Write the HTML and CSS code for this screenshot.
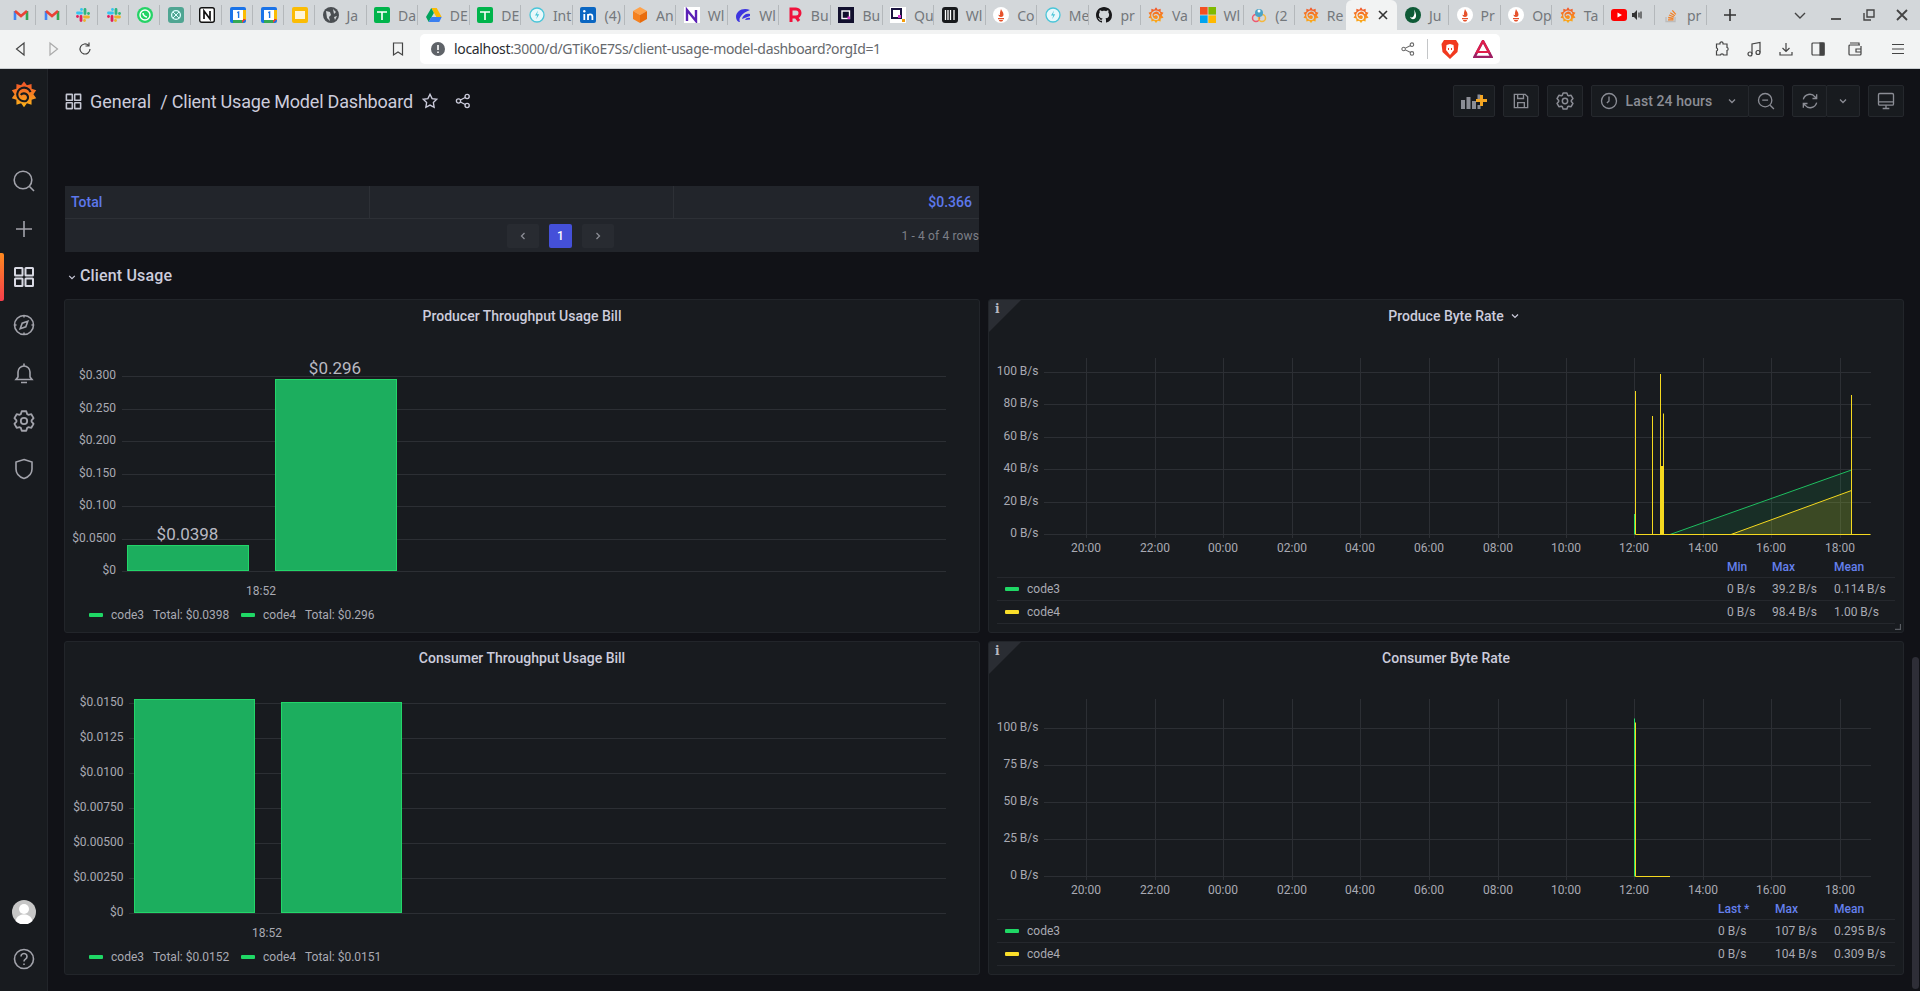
FILE: index.html
```html
<!DOCTYPE html>
<html lang="en">
<head>
<meta charset="utf-8">
<title>Client Usage Model Dashboard</title>
<link rel="stylesheet" href="styles.css">
</head>
<body>
<svg class="defs" aria-hidden="true">
  <defs>
    <linearGradient id="gf" x1="0" y1="0" x2="0" y2="1"><stop offset="0" stop-color="#f2502a"/><stop offset="1" stop-color="#fbb41a"/></linearGradient>
    <symbol id="i-grafana" viewBox="0 0 16 16"><path d="M8 .3 9.790 2.680 12.640 1.810 12.690 4.790 15.510 5.760 13.800 8.200 15.510 10.640 12.690 11.610 12.640 14.590 9.790 13.720 8 16.100 6.210 13.720 3.360 14.590 3.310 11.610 .49 10.640 2.200 8.200 .49 5.760 3.310 4.790 3.360 1.810 6.210 2.680Z" fill="url(#gf)"/><path d="M12 6.800A4.200 4.200 0 1 0 9.200 12.300 2.500 2.500 0 1 0 6 8.600" fill="none" stroke="currentColor" stroke-width="1.300"/></symbol>
    <symbol id="i-gmail" viewBox="0 0 16 16"><path d="M2 13V4" stroke="#4285f4" stroke-width="2.600" fill="none"/><path d="M14 13V4" stroke="#34a853" stroke-width="2.600" fill="none"/><path d="M2 4l6 5 6-5" stroke="#ea4335" stroke-width="2.600" fill="none"/></symbol>
    <symbol id="i-slack" viewBox="0 0 16 16"><g stroke-width="2.800" stroke-linecap="round"><path d="M2.500 6h4" stroke="#36c5f0"/><path d="M10 2.500v4" stroke="#2eb67d"/><path d="M9.500 10h4" stroke="#ecb22e"/><path d="M6 9.500v4" stroke="#e01e5a"/></g><circle cx="6.500" cy="2.500" r="1.400" fill="#36c5f0"/><circle cx="13.500" cy="6.500" r="1.400" fill="#2eb67d"/><circle cx="9.500" cy="13.500" r="1.400" fill="#ecb22e"/><circle cx="2.500" cy="9.500" r="1.400" fill="#e01e5a"/></symbol>
    <symbol id="i-wa" viewBox="0 0 16 16"><circle cx="8" cy="8" r="8" fill="#25d366"/><circle cx="8" cy="8" r="5" fill="none" stroke="#fff" stroke-width="1.400"/><path d="M6 6c0 2 2 4 4 4" stroke="#fff" stroke-width="1.600" fill="none"/></symbol>
    <symbol id="i-gpt" viewBox="0 0 16 16"><rect width="16" height="16" rx="3" fill="#4fa592"/><circle cx="8" cy="8" r="4.400" fill="none" stroke="#dff" stroke-width="1.300"/><path d="M5 5l6 6M11 5l-6 6" stroke="#dff"/></symbol>
    <symbol id="i-notion" viewBox="0 0 16 16"><rect x=".7" y=".7" width="14.600" height="14.600" rx="2" fill="#fff" stroke="#111" stroke-width="1.400"/><path d="M5 12V4l6 8V4" stroke="#111" stroke-width="1.700" fill="none"/></symbol>
    <symbol id="i-gcal" viewBox="0 0 16 16"><rect width="16" height="16" rx="2" fill="#1a73e8"/><rect x="12" y="3" width="4" height="10" fill="#fbbc04"/><rect x="3" y="12" width="10" height="4" fill="#34a853"/><path d="M12 16l4-4h-4z" fill="#ea4335"/><rect x="3" y="3" width="10" height="10" fill="#fff"/><path d="M7.200 5.600 8.600 5v6" stroke="#1a73e8" stroke-width="1.400" fill="none"/></symbol>
    <symbol id="i-slides" viewBox="0 0 16 16"><rect width="16" height="16" rx="2" fill="#fbbc04"/><rect x="3" y="4" width="10" height="8" fill="#fff5d6"/></symbol>
    <symbol id="i-globe" viewBox="0 0 16 16"><circle cx="8" cy="8" r="8" fill="#4a4e52"/><path d="M3 4l4 1 1 3-2 2 1 4-3-3zM10 2l3 3-2 2zM11 10l3-1-2 4z" fill="#d3d7da"/></symbol>
    <symbol id="i-sheets" viewBox="0 0 16 16"><rect width="16" height="16" rx="2" fill="#00b44b"/><path d="M3 5h10M8 5v8" stroke="#fff" stroke-width="1.600"/></symbol>
    <symbol id="i-drive" viewBox="0 0 16 16"><path d="M5.300 1h5.400l5 9h-5.400z" fill="#fbbc04"/><path d="M5.300 1 0 10l2.700 5 5.200-9z" fill="#00a35c"/><path d="M2.700 15h10.600l2.400-5H5.300z" fill="#3a7ff0"/></symbol>
    <symbol id="i-bolt" viewBox="0 0 16 16"><circle cx="8" cy="8" r="7" fill="#e9f8fb" stroke="#49c5d8" stroke-width="1.300"/><path d="M9 3.600 6 8.600h2.200l-1 3.600 3-5H8z" fill="#49c5d8"/></symbol>
    <symbol id="i-li" viewBox="0 0 16 16"><rect width="16" height="16" rx="2" fill="#0a66c2"/><path d="M4.300 7v6M8 13V7M8 9.600c0-3 4.400-3 4.400 0V13" stroke="#fff" stroke-width="1.800" fill="none"/><circle cx="4.300" cy="4.200" r="1.200" fill="#fff"/></symbol>
    <symbol id="i-cube" viewBox="0 0 16 16"><path d="M8 0l7 4-7 4-7-4z" fill="#ffa24a"/><path d="M1 4l7 4v8l-7-4z" fill="#f5811f"/><path d="M15 4l-7 4v8l7-4z" fill="#e96c0c"/></symbol>
    <symbol id="i-nn" viewBox="0 0 16 16"><rect width="16" height="16" fill="#fff"/><path d="M3 14V3l9 11V3" stroke="#5b21b6" stroke-width="2.400" fill="none"/></symbol>
    <symbol id="i-wave" viewBox="0 0 16 16"><path d="M15 3C8 0 1 4 1 10c0 3 2 5 4 5C3 11 7 6 15 3z" fill="#3d35e0"/><path d="M15 7c-4-1-7 1-8 5l8-3zM15 11c-2-.5-4 0-5 2l5-.5z" fill="#3d35e0"/></symbol>
    <symbol id="i-r" viewBox="0 0 16 16"><path d="M4 15V2h5a3.600 3.600 0 0 1 0 8H4m5 0 3 4" fill="none" stroke="#f0123c" stroke-width="3"/></symbol>
    <symbol id="i-bu" viewBox="0 0 16 16"><rect width="16" height="16" fill="#12102e"/><rect x="4" y="4" width="7.500" height="7.500" fill="none" stroke="#fff" stroke-width="1.400"/><rect x="9.500" y="9.500" width="2.500" height="2.500" fill="#e13ad4"/></symbol>
    <symbol id="i-qu" viewBox="0 0 16 16"><rect width="16" height="16" fill="#fff"/><rect x="2" y="2" width="9" height="9" fill="none" stroke="#1b1440" stroke-width="2"/><rect x="8" y="8" width="3" height="3" fill="#d93ad4"/><rect x="12" y="12" width="3" height="3" fill="#f59e0b"/></symbol>
    <symbol id="i-bars" viewBox="0 0 16 16"><rect width="16" height="16" rx="3" fill="#17191c"/><path d="M3.500 3v10M6 3v10M8.500 3v10M12 3v10" stroke="#fff" stroke-width="1.300"/></symbol>
    <symbol id="i-prom" viewBox="0 0 16 16"><circle cx="8" cy="8" r="8" fill="#fff"/><path d="M8 2c.5 2 2.500 3 2.500 5.500 0 1.500-.7 2.500-2.500 2.500S5.500 9 5.500 7.500C6 8 6.500 8 7 8 6.500 6 7.500 4 8 2zM5 11h6v1.300H5zM6 13h4c0 1-1 1.500-2 1.500S6 14 6 13z" fill="#e6522c"/></symbol>
    <symbol id="i-gh" viewBox="0 0 16 16"><path fill="#18181a" d="M8 0C3.580 0 0 3.580 0 8c0 3.540 2.290 6.530 5.470 7.590.4.070.55-.17.55-.38 0-.19-.01-.82-.01-1.490-2.010.37-2.530-.49-2.690-.94-.09-.23-.48-.94-.82-1.130-.28-.15-.68-.52-.01-.53.63-.01 1.080.58 1.230.82.72 1.210 1.870.87 2.330.66.07-.52.28-.87.51-1.070-1.780-.2-3.640-.89-3.640-3.950 0-.87.31-1.590.82-2.150-.08-.2-.36-1.020.08-2.120 0 0 .67-.21 2.200.82.64-.18 1.320-.27 2-.27.68 0 1.360.09 2 .27 1.530-1.040 2.200-.82 2.200-.82.44 1.100.16 1.920.08 2.120.51.56.82 1.270.82 2.150 0 3.070-1.870 3.750-3.650 3.950.29.25.54.73.54 1.480 0 1.070-.01 1.930-.01 2.200 0 .21.15.46.55.38A8.013 8.013 0 0016 8c0-4.420-3.580-8-8-8z"/></symbol>
    <symbol id="i-ms" viewBox="0 0 16 16"><rect width="7.600" height="7.600" fill="#f25022"/><rect x="8.400" width="7.600" height="7.600" fill="#7fba00"/><rect y="8.400" width="7.600" height="7.600" fill="#00a4ef"/><rect x="8.400" y="8.400" width="7.600" height="7.600" fill="#ffb900"/></symbol>
    <symbol id="i-multi" viewBox="0 0 16 16"><circle cx="5" cy="11" r="3.500" fill="none" stroke="#ef5a6f" stroke-width="1.500"/><circle cx="11" cy="11" r="3.500" fill="none" stroke="#f5b83d" stroke-width="1.500"/><circle cx="8" cy="6" r="4" fill="#4ba3c7"/><circle cx="8" cy="4" r="1.500" fill="#fff"/></symbol>
    <symbol id="i-ju" viewBox="0 0 16 16"><circle cx="8" cy="8" r="8" fill="#0e5a36"/><path d="M9 2.500c1 3 .5 6-1 7.500-1 .8-2.500.5-3-.5.500 2.500 3 3.500 5 2 2-2 1-6-1-9z" fill="#fff"/></symbol>
    <symbol id="i-yt" viewBox="0 0 16 16"><rect y="2" width="16" height="12" rx="3" fill="#f00"/><path d="M6.500 5.500v5L11 8z" fill="#fff"/></symbol>
    <symbol id="i-so" viewBox="0 0 16 16"><path d="M3 10v4.500h9V10" fill="none" stroke="#bcbbbb" stroke-width="1.300"/><path d="M5 12.800h5.500M5.200 10.500l5.300 1M6 8l5 2M7.300 5.700l4.500 3M9.300 3.400l3.500 4" stroke="#f48024" stroke-width="1.300" fill="none"/></symbol>
    <symbol id="i-gear" viewBox="0 0 24 24"><path d="M8.790 5.110 9.750 2.260H14.250L15.210 5.110 16.360 5.770 19.310 5.180 21.560 9.080 19.570 11.340V12.660L21.560 14.920 19.310 18.820 16.360 18.230 15.210 18.890 14.250 21.740H9.750L8.790 18.890 7.640 18.230 4.690 18.820 2.440 14.920 4.430 12.660V11.340L2.440 9.080 4.690 5.180 7.640 5.770Z" fill="none" stroke="currentColor" stroke-width="1.800" stroke-linejoin="round"/><circle cx="12" cy="12" r="3.200" fill="none" stroke="currentColor" stroke-width="1.800"/></symbol>
    <symbol id="i-apps" viewBox="0 0 24 24"><g fill="none" stroke="currentColor" stroke-width="2"><rect x="3" y="3" width="7.500" height="7.500" rx=".5"/><rect x="13.500" y="3" width="7.500" height="7.500" rx=".5"/><rect x="3" y="13.500" width="7.500" height="7.500" rx=".5"/><rect x="13.500" y="13.500" width="7.500" height="7.500" rx=".5"/></g></symbol>
  </defs>
</svg>

<header class="chrome">
  <div class="tabstrip">
    <div class="tab narrow"><svg class="fav"><use href="#i-gmail"/></svg></div>
    <div class="tab narrow"><svg class="fav"><use href="#i-gmail"/></svg></div>
    <div class="tab narrow"><svg class="fav"><use href="#i-slack"/></svg></div>
    <div class="tab narrow"><svg class="fav"><use href="#i-slack"/></svg></div>
    <div class="tab narrow"><svg class="fav"><use href="#i-wa"/></svg></div>
    <div class="tab narrow"><svg class="fav"><use href="#i-gpt"/></svg></div>
    <div class="tab narrow"><svg class="fav"><use href="#i-notion"/></svg></div>
    <div class="tab narrow"><svg class="fav"><use href="#i-gcal"/></svg></div>
    <div class="tab narrow"><svg class="fav"><use href="#i-gcal"/></svg></div>
    <div class="tab narrow"><svg class="fav"><use href="#i-slides"/></svg></div>
    <div class="tab"><svg class="fav"><use href="#i-globe"/></svg><span>Ja</span></div>
    <div class="tab"><svg class="fav"><use href="#i-sheets"/></svg><span>Da</span></div>
    <div class="tab"><svg class="fav"><use href="#i-drive"/></svg><span>DE</span></div>
    <div class="tab"><svg class="fav"><use href="#i-sheets"/></svg><span>DE</span></div>
    <div class="tab"><svg class="fav"><use href="#i-bolt"/></svg><span>Int</span></div>
    <div class="tab"><svg class="fav"><use href="#i-li"/></svg><span>(4)</span></div>
    <div class="tab"><svg class="fav"><use href="#i-cube"/></svg><span>An</span></div>
    <div class="tab"><svg class="fav"><use href="#i-nn"/></svg><span>Wl</span></div>
    <div class="tab"><svg class="fav"><use href="#i-wave"/></svg><span>Wl</span></div>
    <div class="tab"><svg class="fav"><use href="#i-r"/></svg><span>Bu</span></div>
    <div class="tab"><svg class="fav"><use href="#i-bu"/></svg><span>Bu</span></div>
    <div class="tab"><svg class="fav"><use href="#i-qu"/></svg><span>Qu</span></div>
    <div class="tab"><svg class="fav"><use href="#i-bars"/></svg><span>Wl</span></div>
    <div class="tab"><svg class="fav"><use href="#i-prom"/></svg><span>Co</span></div>
    <div class="tab"><svg class="fav"><use href="#i-bolt"/></svg><span>Me</span></div>
    <div class="tab"><svg class="fav"><use href="#i-gh"/></svg><span>pr</span></div>
    <div class="tab"><svg class="fav"><use href="#i-grafana"/></svg><span>Va</span></div>
    <div class="tab"><svg class="fav"><use href="#i-ms"/></svg><span>Wl</span></div>
    <div class="tab"><svg class="fav"><use href="#i-multi"/></svg><span>(2</span></div>
    <div class="tab"><svg class="fav"><use href="#i-grafana"/></svg><span>Re</span></div>
    <div class="tab active"><svg class="fav"><use href="#i-grafana"/></svg><svg class="tabx" viewBox="0 0 10 10"><path d="M1 1l8 8M9 1l-8 8"/></svg></div>
    <div class="tab"><svg class="fav"><use href="#i-ju"/></svg><span>Ju</span></div>
    <div class="tab"><svg class="fav"><use href="#i-prom"/></svg><span>Pr</span></div>
    <div class="tab"><svg class="fav"><use href="#i-prom"/></svg><span>Op</span></div>
    <div class="tab"><svg class="fav"><use href="#i-grafana"/></svg><span>Ta</span></div>
    <div class="tab"><svg class="fav"><use href="#i-yt"/></svg><svg class="speaker" viewBox="0 0 12 12"><path d="M1 4h2l3-3v10L3 8H1z" fill="#333"/><path d="M8 3.500v5M10 2.500v7" stroke="#333" stroke-width="1.200"/></svg></div>
    <div class="tab"><svg class="fav"><use href="#i-so"/></svg><span>pr</span></div>
    <svg class="newtab" viewBox="0 0 14 14"><path d="M7 1v12M1 7h12"/></svg>
    <div class="winctl">
      <svg viewBox="0 0 12 12"><path d="M1 4l5 5 5-5"/></svg>
      <svg viewBox="0 0 12 12"><path d="M1 10h10" class="thick"/></svg>
      <svg viewBox="0 0 12 12"><path d="M4 1h7v7H4zM1 4v7h7"/></svg>
      <svg viewBox="0 0 12 12"><path d="M1 1l10 10M11 1 1 11" class="thick"/></svg>
    </div>
  </div>
  <div class="toolbar">
    <div class="nav-btns">
      <svg class="tb" viewBox="0 0 16 16"><path d="M11 2v12L3.500 8z"/></svg>
      <svg class="tb dim" viewBox="0 0 16 16"><path d="M5 2v12l7.500-6z"/></svg>
      <svg class="tb" viewBox="0 0 16 16"><path d="M13 8a5 5 0 1 1-1.500-3.600M12 1.500V5H8.500"/></svg>
    </div>
    <svg class="tb bookmark" viewBox="0 0 16 16"><path d="M3.500 2h9v12L8 11l-4.500 3z"/></svg>
    <div class="address">
      <svg class="info" viewBox="0 0 14 14"><circle cx="7" cy="7" r="7" fill="#5f6368"/><path d="M7 3v5M7 9.500v1.500" stroke="#fff" stroke-width="1.600"/></svg>
      <span class="url"><b>localhost</b>:3000/d/GTiKoE7Ss/client-usage-model-dashboard?orgId=1</span>
      <svg class="tb addr-share" viewBox="0 0 16 16"><circle cx="3" cy="8" r="2"/><circle cx="12.500" cy="3" r="2"/><circle cx="12.500" cy="13" r="2"/><path d="M5 7l6-3M5 9l6 3"/></svg>
      <i class="addr-sep"></i>
      <svg class="brave" viewBox="0 0 18 20"><path d="M3 1h12l2.500 4-1 8L9 20l-7.500-7-1-8z" fill="#f1391f"/><path d="M5.500 6 9 5l3.500 1 .5 5-4 5-4-5z" fill="#fff"/><path d="M7 9h1v2H7zM10 9h1v2h-1z" fill="#f1391f"/></svg>
      <svg class="bat" viewBox="0 0 20 18"><path d="M10 1 18.500 17H1.500z" fill="none" stroke="#9e1f63" stroke-width="2.600"/><path d="M10 1 4 12h12z" fill="none" stroke="#e01e4a" stroke-width="2"/></svg>
    </div>
    <div class="tb-right">
      <svg class="tb puzzle" viewBox="0 0 16 16"><path d="M6 2c0-1.500 3-1.500 3 0v1h4v3.500c1.500 0 1.500 3 0 3V14H9.500c0-1.500-3-1.500-3 0H2.500v-4c1.500 0 1.500-3 0-3V3H6z"/></svg>
      <svg class="tb" viewBox="0 0 16 16"><circle cx="4" cy="13" r="2"/><circle cx="12" cy="11.500" r="2"/><path d="M6 13V3l8-1.500v10"/></svg>
      <svg class="tb" viewBox="0 0 16 16"><path d="M8 2v8M4.500 7 8 10.500 11.500 7M2 11v3h12v-3"/></svg>
      <svg class="tb" viewBox="0 0 16 16"><rect x="2" y="2" width="12" height="12" rx="1"/><rect x="10" y="2" width="4" height="12" fill="#444"/></svg>
      <svg class="tb" viewBox="0 0 16 16"><path d="M13 4H3a1 1 0 0 0-1 1v8a1 1 0 0 0 1 1h10a1 1 0 0 0 1-1V5M3 2h9v2M9 8h5v3H9z"/></svg>
      <svg class="tb" viewBox="0 0 16 16"><path d="M2 3.500h12M2 8h12M2 12.500h12"/></svg>
    </div>
  </div>
</header>

<div class="app">
  <aside class="sidebar">
    <svg class="logo"><use href="#i-grafana"/></svg>
    <nav class="side-nav">
      <svg class="side-icon" viewBox="0 0 24 24"><circle cx="11" cy="11" r="8.800"/><path d="M17.500 17.500l4.500 4.500"/></svg>
      <svg class="side-icon" viewBox="0 0 24 24"><path d="M12 4v16M4 12h16"/></svg>
      <span class="side-active"><svg class="side-icon bright"><use href="#i-apps"/></svg></span>
      <svg class="side-icon" viewBox="0 0 24 24"><circle cx="12" cy="12" r="9.500"/><path d="M15.800 8.200 13.800 13.800 8.200 15.800 10.200 10.200Z"/><path d="M12 2.500v2M12 19.500v2M2.500 12h2M19.500 12h2"/></svg>
      <svg class="side-icon" viewBox="0 0 24 24"><path d="M12 2.500v2M6 16v-5a6 6 0 0 1 12 0v5l2 2.500H4zM9 21.500h6"/></svg>
      <svg class="side-icon gear-c"><use href="#i-gear"/></svg>
      <svg class="side-icon" viewBox="0 0 24 24"><path d="M12 2.500 20 5v7c0 5-3.500 8-8 9.500C7.500 20 4 17 4 12V5z"/></svg>
    </nav>
    <div class="side-bottom">
      <svg class="avatar" viewBox="0 0 24 24"><circle cx="12" cy="12" r="12" fill="#c6c6c6"/><circle cx="12" cy="9" r="5" fill="#fff"/><path d="M3.500 21c1-5 5-6.500 8.500-6.500s7.500 1.500 8.500 6.500a12 12 0 0 1-17 0z" fill="#fff"/></svg>
      <svg class="side-icon help" viewBox="0 0 24 24"><circle cx="12" cy="12" r="9.500"/><path d="M9 9.500a3 3 0 1 1 4.500 2.600c-1 .6-1.500 1.200-1.500 2.400M12 16.500v1.500"/></svg>
    </div>
  </aside>

  <main class="main">
    <div class="navbar">
      <div class="crumbs">
        <svg class="crumb-icon"><use href="#i-apps"/></svg>
        <span class="crumb-folder">General</span>
        <span class="crumb-title">/ Client Usage Model Dashboard</span>
        <svg class="nav-icon star" viewBox="0 0 24 24"><path d="M12 3l2.800 5.800 6.200.9-4.500 4.400 1 6.300L12 17.400l-5.500 3 1-6.300L3 9.700l6.200-.9z"/></svg>
        <svg class="nav-icon" viewBox="0 0 24 24"><circle cx="6" cy="12" r="2.800"/><circle cx="17.500" cy="6" r="2.800"/><circle cx="17.500" cy="18" r="2.800"/><path d="M8.500 10.700l6.500-3.400M8.500 13.300l6.500 3.400"/></svg>
      </div>
      <div class="nav-actions">
        <button class="btn w42"><svg class="add-icon" viewBox="0 0 26 16"><path class="filled" d="M0 7h4v9H0zM5.500 4h4v12h-4zM11 8h4v8h-4zM16.500 1.500h3v5h-3zM16.500 12h3v4h-3z"/><path class="plus" d="M20.500 2v11M15 7.500h11"/></svg></button>
        <button class="btn w36"><svg class="btn-icon" viewBox="0 0 24 24"><path d="M4 4h13l3 3v13H4zM8 4v5h7V4M8 20v-6h8v6"/></svg></button>
        <button class="btn w36"><svg class="btn-svg"><use href="#i-gear"/></svg></button>
        <div class="btn-group">
          <button class="btn timepick"><svg class="btn-icon" viewBox="0 0 24 24"><circle cx="12" cy="12" r="9"/><path d="M12 6.500V12l-2.500 2.500"/></svg><span>Last 24 hours</span><svg class="chev" viewBox="0 0 10 10"><path d="M2 3.500 5 6.500 8 3.500"/></svg></button>
          <button class="btn w36 joined"><svg class="btn-icon" viewBox="0 0 24 24"><circle cx="11" cy="11" r="8"/><path d="M17 17l4.500 4.500M7.500 11h7"/></svg></button>
        </div>
        <div class="btn-group">
          <button class="btn w35"><svg class="btn-icon" viewBox="0 0 24 24"><path d="M4 10a8 8 0 0 1 14-3l2 2M20 14a8 8 0 0 1-14 3l-2-2M20 4v5h-5M4 20v-5h5"/></svg></button>
          <button class="btn w34 joined"><svg class="chev" viewBox="0 0 10 10"><path d="M2 3.500 5 6.500 8 3.500"/></svg></button>
        </div>
        <button class="btn w36"><svg class="btn-icon" viewBox="0 0 24 24"><rect x="3" y="3" width="18" height="14" rx="1.500"/><path d="M3 13h18M8 21h8M12 17v4"/></svg></button>
      </div>
    </div>

    <div class="content">
      <section class="table-panel">
        <div class="total-row">
          <div class="total-cell">Total</div>
          <div class="total-cell"></div>
          <div class="total-cell right">$0.366</div>
        </div>
        <div class="pager">
          <span class="page-btn"><svg class="chev" viewBox="0 0 10 10"><path d="M6.500 2 3.500 5 6.500 8"/></svg></span>
          <span class="page-btn current">1</span>
          <span class="page-btn"><svg class="chev" viewBox="0 0 10 10"><path d="M3.500 2 6.500 5 3.500 8"/></svg></span>
          <span class="page-count">1 - 4 of 4 rows</span>
        </div>
      </section>

      <div class="row-title">
        <svg class="row-chev" viewBox="0 0 10 10"><path d="M1.500 3.500 5 7 8.500 3.500"/></svg>
        <span>Client Usage</span>
      </div>

      <div class="panels">
        <article class="panel">
          <h3 class="panel-title">Producer Throughput Usage Bill</h3>
          <svg class="chart bar-h" viewBox="65 333 914 270">
            <g class="grid">
              <path d="M122 376.500H946M122 409.500H946M122 441.500H946M122 474.500H946M122 506.500H946M122 539.500H946M122 571.500H946"/>
            </g>
            <rect class="bar" x="127.500" y="545.500" width="121" height="25"/>
            <rect class="bar" x="275.500" y="379.500" width="121" height="191"/>
            <g class="axis end">
              <text x="116" y="379">$0.300</text>
              <text x="116" y="412">$0.250</text>
              <text x="116" y="444">$0.200</text>
              <text x="116" y="477">$0.150</text>
              <text x="116" y="509">$0.100</text>
              <text x="116" y="542">$0.0500</text>
              <text x="116" y="574">$0</text>
            </g>
            <g class="axis mid"><text x="261" y="595">18:52</text></g>
            <g class="val mid">
              <text x="187.500" y="540">$0.0398</text>
              <text x="335" y="374">$0.296</text>
            </g>
          </svg>
          <div class="legend">
            <i class="sw green"></i><span class="lg-name">code3</span><span class="lg-total">Total: $0.0398</span>
            <i class="sw green"></i><span class="lg-name">code4</span><span class="lg-total">Total: $0.296</span>
          </div>
        </article>

        <article class="panel">
          <span class="corner"><span class="corner-i">i</span></span>
          <h3 class="panel-title with-chev">Produce Byte Rate <svg class="title-chev" viewBox="0 0 10 10"><path d="M2 3.500 5 6.500 8 3.500"/></svg></h3>
          <svg class="chart line-h" viewBox="989 333 914 225">
            <g class="grid">
              <path d="M1044 372.500H1871M1044 404.500H1871M1044 437.500H1871M1044 469.500H1871M1044 502.500H1871M1044 534.500H1871"/>
              <path d="M1086.500 358V538M1155.500 358V538M1223.500 358V538M1292.500 358V538M1360.500 358V538M1429.500 358V538M1498.500 358V538M1566.500 358V538M1634.500 358V538M1703.500 358V538M1771.500 358V538M1840.500 358V538"/>
            </g>
            <path class="area-g" d="M1670 534.500 1851.500 470V534.500Z"/>
            <path class="area-y" d="M1731 534.500 1851.500 490.500V534.500Z"/>
            <path class="line-g" d="M1670 534.500 1851.500 470"/>
            <path class="line-gb" d="M1634.500 534.500V514"/>
            <path class="line-y" d="M1635.500 534.500V391M1652.500 534.500V416M1660.500 534.500V374M1663.500 534.500V413.500M1635.500 534.500H1870.500M1731 534.500 1851.500 490.500M1851.500 534.500V395"/>
            <rect class="fill-y" x="1660" y="466" width="4" height="68"/>
            <g class="axis end">
              <text x="1038.500" y="375">100 B/s</text>
              <text x="1038.500" y="407">80 B/s</text>
              <text x="1038.500" y="440">60 B/s</text>
              <text x="1038.500" y="472">40 B/s</text>
              <text x="1038.500" y="505">20 B/s</text>
              <text x="1038.500" y="537">0 B/s</text>
            </g>
            <g class="axis mid">
              <text x="1086" y="552">20:00</text><text x="1155" y="552">22:00</text><text x="1223" y="552">00:00</text><text x="1292" y="552">02:00</text><text x="1360" y="552">04:00</text><text x="1429" y="552">06:00</text><text x="1498" y="552">08:00</text><text x="1566" y="552">10:00</text><text x="1634" y="552">12:00</text><text x="1703" y="552">14:00</text><text x="1771" y="552">16:00</text><text x="1840" y="552">18:00</text>
            </g>
          </svg>
          <table class="stats">
            <thead><tr><th class="c-name"></th><th class="c-min">Min</th><th class="c-max">Max</th><th class="c-mean">Mean</th></tr></thead>
            <tbody>
              <tr><td><i class="sw green"></i>code3</td><td>0 B/s</td><td>39.2 B/s</td><td>0.114 B/s</td></tr>
              <tr><td><i class="sw yellow"></i>code4</td><td>0 B/s</td><td>98.4 B/s</td><td>1.00 B/s</td></tr>
            </tbody>
          </table>
          <svg class="resize" viewBox="0 0 6 6"><path d="M5.500 0V5.500H0"/></svg>
        </article>

        <article class="panel">
          <h3 class="panel-title">Consumer Throughput Usage Bill</h3>
          <svg class="chart bar-h" viewBox="65 675 914 270">
            <g class="grid">
              <path d="M129 703.500H946M129 738.500H946M129 773.500H946M129 808.500H946M129 843.500H946M129 878.500H946M129 913.500H946"/>
            </g>
            <rect class="bar" x="134.500" y="699.500" width="120" height="213"/>
            <rect class="bar" x="281.500" y="702.500" width="120" height="210"/>
            <g class="axis end">
              <text x="123.500" y="706">$0.0150</text>
              <text x="123.500" y="741">$0.0125</text>
              <text x="123.500" y="776">$0.0100</text>
              <text x="123.500" y="811">$0.00750</text>
              <text x="123.500" y="846">$0.00500</text>
              <text x="123.500" y="881">$0.00250</text>
              <text x="123.500" y="916">$0</text>
            </g>
            <g class="axis mid"><text x="267" y="937">18:52</text></g>
          </svg>
          <div class="legend">
            <i class="sw green"></i><span class="lg-name">code3</span><span class="lg-total">Total: $0.0152</span>
            <i class="sw green"></i><span class="lg-name">code4</span><span class="lg-total">Total: $0.0151</span>
          </div>
        </article>

        <article class="panel">
          <span class="corner"><span class="corner-i">i</span></span>
          <h3 class="panel-title">Consumer Byte Rate</h3>
          <svg class="chart line-h" viewBox="989 675 914 225">
            <g class="grid">
              <path d="M1044 728.500H1871M1044 765.500H1871M1044 802.500H1871M1044 839.500H1871M1044 876.500H1871"/>
              <path d="M1086.500 699V880M1155.500 699V880M1223.500 699V880M1292.500 699V880M1360.500 699V880M1429.500 699V880M1498.500 699V880M1566.500 699V880M1634.500 699V880M1703.500 699V880M1771.500 699V880M1840.500 699V880"/>
            </g>
            <path class="line-gb" d="M1634.500 876.500V718.500"/>
            <path class="line-y" d="M1635.500 876.500V722.500M1635.500 876.500H1670"/>
            <g class="axis end">
              <text x="1038.500" y="731">100 B/s</text>
              <text x="1038.500" y="768">75 B/s</text>
              <text x="1038.500" y="805">50 B/s</text>
              <text x="1038.500" y="842">25 B/s</text>
              <text x="1038.500" y="879">0 B/s</text>
            </g>
            <g class="axis mid">
              <text x="1086" y="894">20:00</text><text x="1155" y="894">22:00</text><text x="1223" y="894">00:00</text><text x="1292" y="894">02:00</text><text x="1360" y="894">04:00</text><text x="1429" y="894">06:00</text><text x="1498" y="894">08:00</text><text x="1566" y="894">10:00</text><text x="1634" y="894">12:00</text><text x="1703" y="894">14:00</text><text x="1771" y="894">16:00</text><text x="1840" y="894">18:00</text>
            </g>
          </svg>
          <table class="stats">
            <thead><tr><th class="c-name"></th><th class="c-last">Last *</th><th class="c-max2">Max</th><th class="c-mean">Mean</th></tr></thead>
            <tbody>
              <tr><td><i class="sw green"></i>code3</td><td>0 B/s</td><td>107 B/s</td><td>0.295 B/s</td></tr>
              <tr><td><i class="sw yellow"></i>code4</td><td>0 B/s</td><td>104 B/s</td><td>0.309 B/s</td></tr>
            </tbody>
          </table>
        </article>
      </div>
    </div>
    <div class="scrollbar"></div>
  </main>
</div>
</body>
</html>
```

FILE: styles.css
```css
* { box-sizing: border-box; }
html, body { margin: 0; height: 100%; overflow: hidden; }
body { background: #111217; font-family: Roboto, "Liberation Sans", sans-serif; color: #ccccdc; }
.defs { position: absolute; width: 0; height: 0; }

/* Browser chrome */
.chrome { height: 69px; background: #f2f3f3; border-bottom: 1px solid #c9cdd0; }
.tabstrip { height: 30px; background: #d3d7da; display: flex; align-items: center; padding-left: 5px; }
.tab { width: 51.6px; height: 30px; flex: none; display: flex; align-items: center; padding-left: 7.5px; gap: 8px; position: relative; overflow: hidden; font: 14px "Noto Sans", Roboto, sans-serif; color: #74787c; }
.tab::after { content: ""; position: absolute; right: 0; top: 5px; height: 20px; width: 1px; background: #b4b8bb; }
.tab.narrow { width: 31px; }
.tab.active { background: #f2f3f3; border-radius: 6px 6px 0 0; margin-left: -1px; gap: 9px; }
.tab.active::after { display: none; }
.fav { width: 16px; height: 16px; flex: none; color: #d3d7da; }
.active .fav { color: #f2f3f3; }
.tabx { width: 10px; height: 10px; stroke: #333; stroke-width: 1.6; }
.speaker { width: 12px; height: 12px; margin-left: -4px; flex: none; }
.newtab { width: 14px; height: 14px; margin-left: 16px; stroke: #333; stroke-width: 1.6; flex: none; }
.winctl { margin-left: auto; display: flex; gap: 21px; padding-right: 12px; align-items: center; }
.winctl svg { width: 12px; height: 12px; fill: none; stroke: #444; stroke-width: 1.4; }
.winctl .thick { stroke-width: 1.8; }
.winctl svg:first-child { margin-right: 3px; }

.toolbar { height: 38px; display: flex; align-items: center; position: relative; }
.tb { width: 16px; height: 16px; fill: none; stroke: #444; stroke-width: 1.2; flex: none; }
.tb.dim { stroke: #aaa; }
.nav-btns { display: flex; gap: 16px; padding-left: 13px; }
.bookmark { margin-left: 297px; }
.address { margin-left: 14px; width: 1080px; height: 30px; background: #fff; border-radius: 5px; display: flex; align-items: center; padding-left: 11px; flex: none; }
.info { width: 14px; height: 14px; flex: none; }
.url { margin-left: 9px; font: 14px/30px "Noto Sans", Roboto, sans-serif; color: #66696d; white-space: nowrap; width: 427px; letter-spacing: -.33px; }
.url b { font-weight: 400; color: #2a2c30; }
.addr-share { margin-left: 520px; stroke: #666; width: 14px; height: 14px; }
.addr-sep { width: 1px; height: 20px; background: #c4c6c8; margin-left: 12px; }
.brave { width: 18px; height: 20px; margin-left: 13px; flex: none; }
.bat { width: 20px; height: 18px; margin-left: 14px; flex: none; }
.tb-right { display: flex; gap: 16px; margin-left: 214px; align-items: center; }
.tb-right svg:nth-child(5) { margin-left: 5px; }
.tb-right svg:nth-child(6) { margin-left: 11px; }

/* App shell */
.app { height: 922px; display: flex; position: relative; }
.sidebar { width: 48px; flex: none; background: #181b1f; border-right: 1px solid #22252a; display: flex; flex-direction: column; align-items: center; }
.logo { width: 26px; height: 28px; margin-top: 11px; color: #181b1f; }
.side-nav { display: flex; flex-direction: column; align-items: center; gap: 24px; margin-top: 61px; }
.side-icon { width: 24px; height: 24px; fill: none; stroke: #a2a3ab; stroke-width: 1.6; display: block; }
.side-icon.bright { stroke: none; color: #d8d9e3; }
.side-icon.gear-c { color: #a2a3ab; stroke: none; }
.side-active { position: relative; display: block; }
.side-active::before { content: ""; position: absolute; left: -12px; top: 0; margin-top: 0; width: 4px; height: 48px; transform: translate(0, -12px); background: linear-gradient(#ff8a1f, #f53e4c); border-radius: 0 2px 2px 0; }
.side-bottom { margin-top: auto; padding-bottom: 20px; display: flex; flex-direction: column; align-items: center; gap: 23px; }
.avatar { width: 24px; height: 24px; display: block; }

.main { flex: 1; min-width: 0; position: relative; }
.navbar { height: 64px; display: flex; align-items: center; justify-content: space-between; padding: 0 16px 0 16px; }
.crumbs { display: flex; align-items: center; }
.crumb-icon { width: 19px; height: 19px; color: #c4c6d2; }
.crumb-folder { margin-left: 7px; font-size: 18px; color: #ccccdc; }
.crumb-title { margin-left: 9px; font-size: 18px; color: #ccccdc; letter-spacing: -.2px; }
.nav-icon { width: 18px; height: 18px; fill: none; stroke: #ccccdc; stroke-width: 1.800; margin-left: 8px; }
.nav-icon.star { margin-right: 7px; }
.nav-actions { display: flex; gap: 8px; }
.btn { height: 32px; padding: 0; background: #181b1f; border: 1px solid #25282d; border-radius: 2px; color: #8b8d95; display: flex; align-items: center; justify-content: center; font: 500 14px Roboto, sans-serif; }
.w42 { width: 42px; } .w36 { width: 36px; } .w35 { width: 35px; } .w34 { width: 34px; }
.btn-group { display: flex; }
.joined { margin-left: -1px; }
.btn-icon { width: 20px; height: 20px; fill: none; stroke: #8b8d95; stroke-width: 1.600; }
.btn-svg { width: 20px; height: 20px; color: #8b8d95; }
.add-icon { width: 26px; height: 16px; }
.btn .filled { fill: #8b8d95; stroke: none; }
.btn .plus { stroke: #f5a623; stroke-width: 3; fill: none; }
.timepick { width: 158px; justify-content: flex-start; padding-left: 7px; }
.timepick span { margin-left: 6px; width: 88px; white-space: nowrap; letter-spacing: .1px; }
.timepick .chev { margin-left: 14px; }
.chev { width: 10px; height: 10px; fill: none; stroke: #8b8d95; stroke-width: 1.300; }

.content { padding-left: 16px; padding-top: 53px; }
.table-panel { margin-left: 1px; width: 914px; height: 66px; background: #22252b; }
.total-row { display: grid; grid-template-columns: 305px 304px 305px; height: 33px; border-bottom: 1px solid #2d3036; }
.total-cell { font-size: 14px; font-weight: 500; color: #5d78ec; line-height: 32px; padding: 0 7px 0 6px; border-right: 1px solid #2d3036; }
.total-cell.right { text-align: right; border-right: 0; }
.pager { height: 33px; display: flex; align-items: center; padding-left: 442px; gap: 10px; }
.page-btn { width: 32px; height: 24px; background: #282b31; border-radius: 2px; display: flex; align-items: center; justify-content: center; font-size: 12px; font-weight: 500; color: #fff; }
.page-btn.current { width: 23px; background: #4450d9; }
.page-count { margin-left: auto; font-size: 12px; letter-spacing: .14px; color: #7c7f87; white-space: nowrap; }

.row-title { height: 47px; display: flex; align-items: center; padding-left: 4px; gap: 4px; font-size: 16px; font-weight: 500; letter-spacing: .15px; color: #ccccdc; }
.row-chev { width: 8px; height: 8px; fill: none; stroke: #ccccdc; stroke-width: 1.500; margin-top: 2px; }

.panels { display: grid; grid-template-columns: 916px 916px; grid-auto-rows: 334px; gap: 8px; }
.panel { background: #181b1f; border: 1px solid #22252a; border-radius: 3px; position: relative; display: flex; flex-direction: column; overflow: hidden; }
.panel-title { margin: 0; height: 33px; padding-bottom: 2px; display: flex; align-items: center; justify-content: center; gap: 4px; font-size: 14px; font-weight: 500; color: #ccccdc; flex: none; }
.with-chev { padding-left: 16px; }
.title-chev { width: 10px; height: 10px; fill: none; stroke: #ccccdc; stroke-width: 1.200; margin-left: 2px; }
.corner { position: absolute; left: 0; top: 0; width: 32px; height: 32px; background: #2a2d33; clip-path: polygon(0 0, 100% 0, 0 100%); }
.corner-i { position: absolute; left: 6px; top: 2px; font: bold 12px/14px "DejaVu Serif", serif; color: #b8b9c2; }

.chart { display: block; width: 914px; flex: none; }
.bar-h { height: 270px; }
.line-h { height: 225px; }
.grid path { fill: none; stroke: #2c2f34; stroke-width: 1; }
.bar { fill: #1cae5e; stroke: #22d669; stroke-width: 1; }
.axis text { font: 12px Roboto, sans-serif; fill: #a9aab3; }
.end text { text-anchor: end; }
.mid text { text-anchor: middle; }
.val text { font: 17px Roboto, sans-serif; fill: #b8b9c2; }
.line-g { fill: none; stroke: #1fbf60; stroke-width: 1; }
.line-gb { fill: none; stroke: #22e06c; stroke-width: 1; }
.line-y { fill: none; stroke: #f5d91f; stroke-width: 1; }
.fill-y { fill: #f5d91f; }
.area-g { fill: rgba(34, 214, 105, .1); }
.area-y { fill: rgba(245, 217, 31, .16); }

.legend { height: 24px; display: flex; align-items: center; padding-left: 24px; font-size: 12px; color: #a9aab3; }
.sw { display: inline-block; width: 14px; height: 4px; border-radius: 1px; flex: none; }
.sw.green { background: #1fd865; }
.sw.yellow { background: #fade2a; }
.lg-name { margin-left: 8px; width: 42px; }
.lg-total { width: 88px; white-space: nowrap; }

.stats { margin: 0 8px; width: 898px; table-layout: fixed; border-collapse: collapse; font-size: 12px; color: #a9aab3; }
.stats th { height: 19px; padding: 0 0 1px; text-align: left; font-weight: 500; color: #6580ee; border-bottom: 1px solid #25282d; }
.stats td { height: 23px; padding: 0; border-bottom: 1px solid #25282d; white-space: nowrap; }
.stats td .sw { margin: 0 8px; vertical-align: middle; }
.c-min { width: 45px; } .c-max { width: 62px; } .c-mean { width: 61px; }
.c-last { width: 57px; } .c-max2 { width: 59px; }
.resize { position: absolute; right: 2px; bottom: 2px; width: 6px; height: 6px; fill: none; stroke: #5a5d63; stroke-width: 1.300; }
.scrollbar { position: absolute; right: 1px; top: 588px; bottom: 2px; width: 7px; background: #2e2e37; border-radius: 4px; }
```
